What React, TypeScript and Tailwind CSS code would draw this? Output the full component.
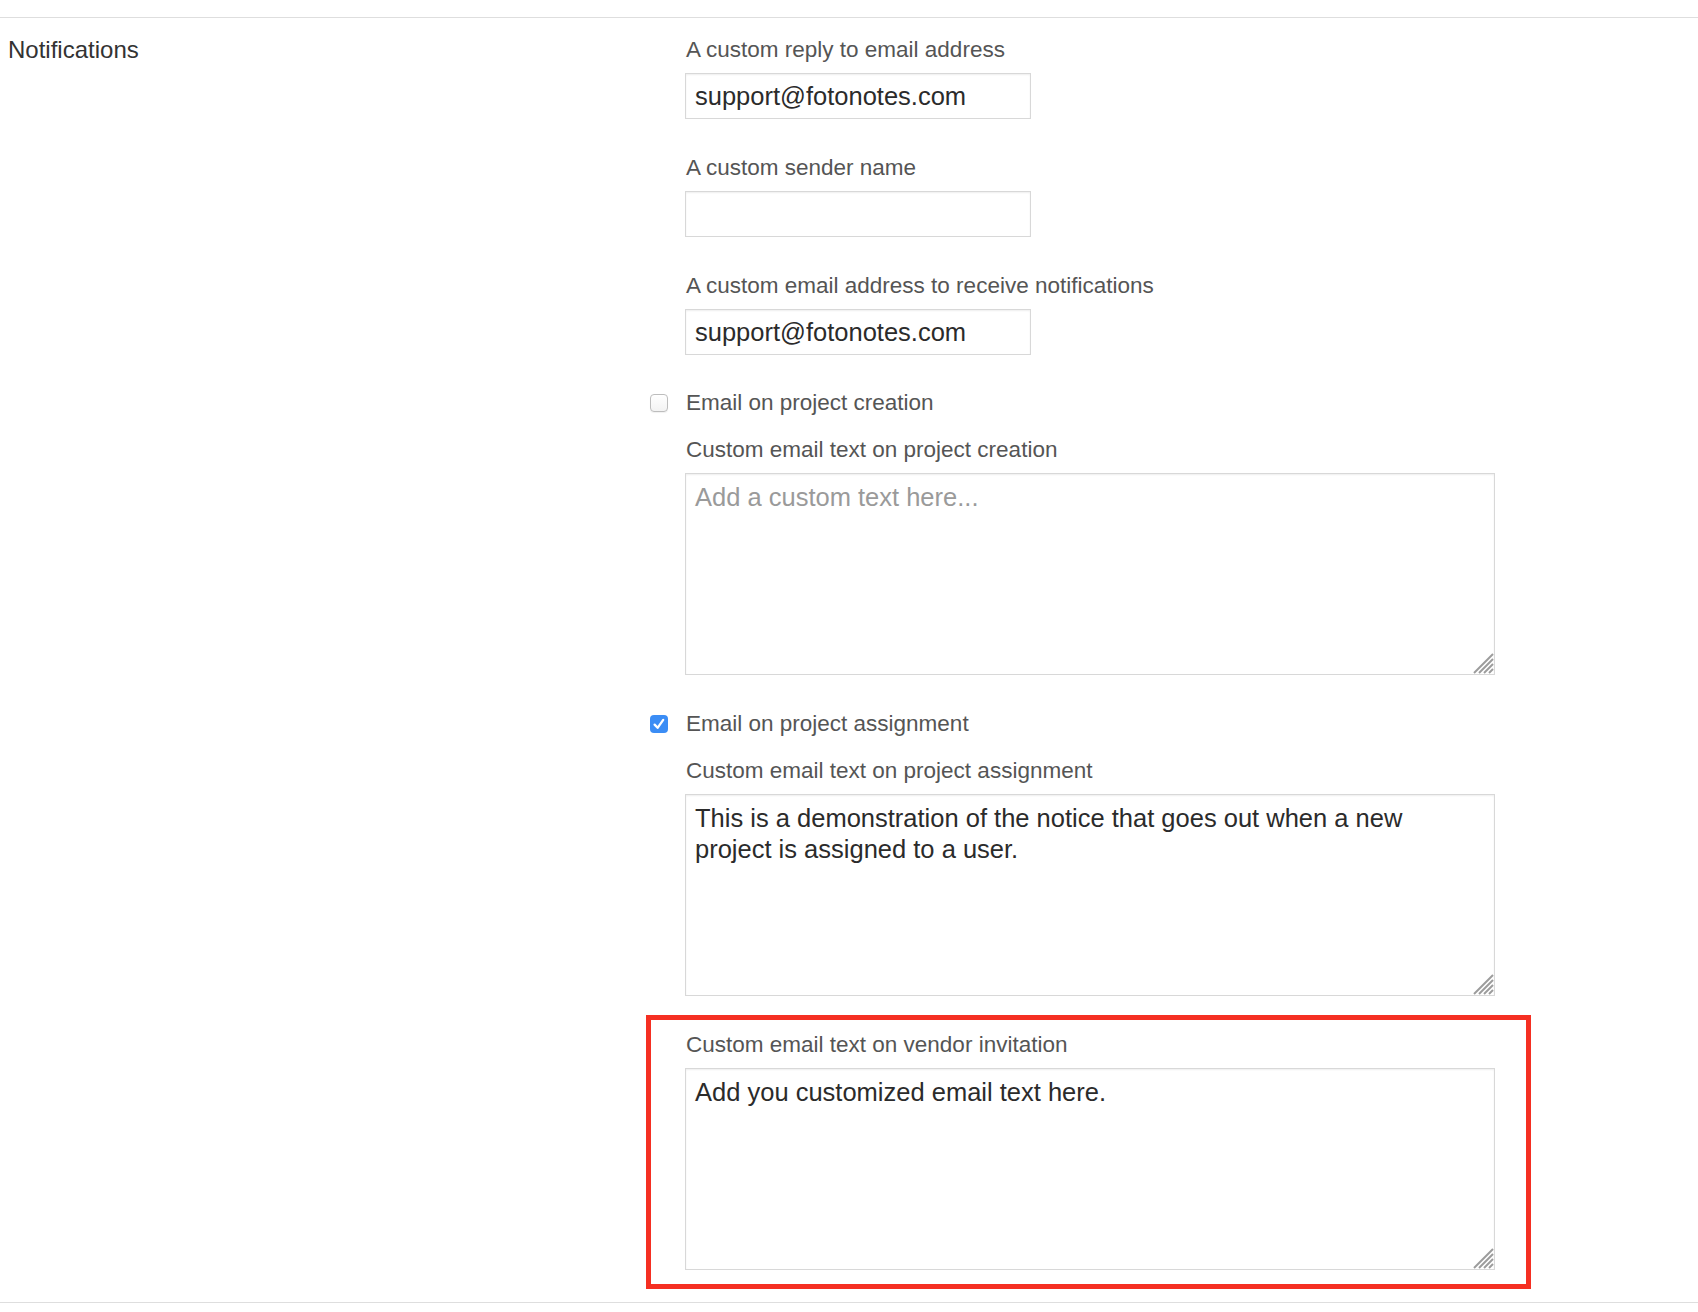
import React from "react";

const FONT = "font-['Liberation_Sans',Arial,sans-serif]";

function Grip() {
  return (
    <svg className="pointer-events-none absolute right-[1px] bottom-[1px]" width="22" height="22" viewBox="0 0 22 22">
      {[4, 9, 14, 19].map((s) => (
        <line key={s} x1={21 - s} y1={21} x2={21} y2={21 - s} stroke="#9c9c9c" strokeWidth="2" />
      ))}
    </svg>
  );
}

function Field({ label, value }: { label: string; value?: string }) {
  return (
    <div className="pl-[39px]">
      <div className="pl-[1px] text-[22.5px] leading-[30px] text-[#555]">{label}</div>
      <input
        defaultValue={value}
        className="mt-[8px] block h-[46px] w-[346px] border border-[#d8d8d8] bg-white px-[9px] pt-[7px] pb-[7px] text-[25.5px] leading-[30px] text-[#2b2b2b] shadow-[inset_0_1px_2px_rgba(0,0,0,0.07)] outline-none"
      />
    </div>
  );
}

function TextArea({ label, value, placeholder, indent = "pl-[39px]" }: { label: string; value?: string; placeholder?: string; indent?: string }) {
  return (
    <div className={indent}>
      <div className="pl-[1px] text-[22.5px] leading-[30px] text-[#555]">{label}</div>
      <div className="relative mt-[8px] w-[810px]">
        <textarea
          defaultValue={value}
          placeholder={placeholder}
          className="block h-[202px] w-full resize-none border border-[#d8d8d8] bg-white pl-[9px] pr-[30px] pt-[7.5px] text-[25.5px] leading-[31.5px] text-[#2b2b2b] shadow-[inset_0_1px_2px_rgba(0,0,0,0.07)] outline-none placeholder:text-[#9a9a9a]"
        />
        <Grip />
      </div>
    </div>
  );
}

function Check({ label, checked }: { label: string; checked?: boolean }) {
  return (
    <div className="flex items-center pl-[4px]">
      {checked ? (
        <span className="flex h-[18px] w-[18px] items-center justify-center rounded-[4px] bg-[#3b8df5]">
          <svg width="18" height="18" viewBox="0 0 18 18">
            <path d="M4.6 9.6 L7.6 12.8 L13.2 4.9" fill="none" stroke="#fff" strokeWidth="2.3" strokeLinecap="round" strokeLinejoin="round" />
          </svg>
        </span>
      ) : (
        <span className="h-[18px] w-[18px] rounded-[4px] border border-[#bdbdbd] bg-gradient-to-b from-white to-[#f3f3f3] shadow-[0_1px_1px_rgba(0,0,0,0.06)]" />
      )}
      <span className="ml-[18px] text-[22.5px] leading-[30px] text-[#555]">{label}</span>
    </div>
  );
}

export default function App() {
  return (
    <div className={`min-h-screen bg-white ${FONT}`}>
      <div className="h-[17px]" />
      <div className="flex border-t border-b border-[#dedede]">
        <div className="w-[646px] shrink-0 pl-[8px] pt-[17px] text-[24px] leading-[30px] text-[#333]">Notifications</div>

        <div className="w-[885px] pt-[17px] pb-[13px]">
          <Field label="A custom reply to email address" value="support@fotonotes.com" />
          <div className="mt-[34px]">
            <Field label="A custom sender name" />
          </div>
          <div className="mt-[34px]">
            <Field label="A custom email address to receive notifications" value="support@fotonotes.com" />
          </div>

          <div className="mt-[33px]">
            <Check label="Email on project creation" />
          </div>
          <div className="mt-[17px]">
            <TextArea label="Custom email text on project creation" placeholder="Add a custom text here..." />
          </div>

          <div className="mt-[34px]">
            <Check label="Email on project assignment" checked />
          </div>
          <div className="mt-[17px]">
            <TextArea
              label="Custom email text on project assignment"
              value="This is a demonstration of the notice that goes out when a new project is assigned to a user."
            />
          </div>

          {/* vendor invitation (highlighted) */}
          <div className="mt-[19px] border-[5px] border-[#f52f22] pt-[10px] pb-[14px]">
            <TextArea
              label="Custom email text on vendor invitation"
              value="Add you customized email text here."
              indent="pl-[34px]"
            />
          </div>
        </div>
      </div>
    </div>
  );
}
